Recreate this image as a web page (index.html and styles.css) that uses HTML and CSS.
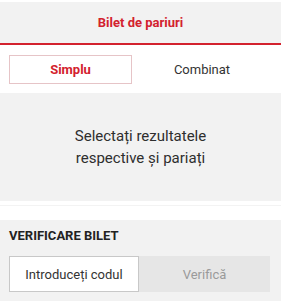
FILE: index.html
```html
<!DOCTYPE html>
<html>
<head>
<meta charset="utf-8">
<link rel="stylesheet" href="styles.css">
</head>
<body>
<div class="slip">
  <div class="header"><span class="title">Bilet de pariuri</span></div>
  <div class="tabs">
    <div class="tab active">Simplu</div>
    <div class="tab">Combinat</div>
  </div>
  <div class="empty">Selectați rezultatele<br>respective și pariați</div>
  <div class="spacer"></div>
  <div class="verify">
    <div class="verify-title">VERIFICARE BILET</div>
    <div class="verify-row">
      <div class="code-input">Introduceți codul</div>
      <div class="verify-btn">Verifică</div>
    </div>
  </div>
</div>
</body>
</html>
```
FILE: styles.css
```css
html, body {
  margin: 0;
  padding: 0;
  background: #fff;
}
body {
  font-family: Roboto, "Liberation Sans", sans-serif;
  color: #333;
}
.slip {
  width: 281px;
  padding-top: 2px;
}
.header {
  height: 41px;
  background: #f2f2f2;
  border-bottom: 2px solid #d3222e;
  display: flex;
  align-items: center;
  justify-content: center;
}
.title {
  color: #d3222e;
  font-weight: 700;
  font-size: 13px;
}
.tabs {
  height: 48px;
  display: flex;
  align-items: center;
  padding: 0 9px;
  box-sizing: border-box;
}
.tab {
  height: 29px;
  display: flex;
  align-items: center;
  justify-content: center;
  font-size: 13px;
  color: #333;
  box-sizing: border-box;
  flex: 1;
}
.tab.active {
  flex: 0 0 123px;
  border: 1px solid #e6c4c7;
  color: #d3222e;
  font-weight: 700;
}
.empty {
  height: 108px;
  background: #f2f2f2;
  display: flex;
  align-items: center;
  justify-content: center;
  text-align: center;
  font-size: 15px;
  line-height: 22px;
  color: #2e2e2e;
}
.spacer {
  height: 15px;
}
.spacer::after {
  content: "";
  display: block;
  height: 1px;
  margin-top: 4px;
  background: #f3f3f3;
}
.verify {
  background: #f2f2f2;
  padding: 8px 11px 9px 9px;
}
.verify-title {
  font-size: 13px;
  font-weight: 700;
  color: #222;
  line-height: 15px;
  margin-bottom: 13px;
}
.verify-row {
  display: flex;
  height: 36px;
}
.code-input {
  width: 130px;
  box-sizing: border-box;
  border: 1px solid #c8c8c8;
  background: #fff;
  display: flex;
  align-items: center;
  justify-content: center;
  font-size: 13px;
  color: #333;
}
.verify-btn {
  flex: 1;
  background: #e6e6e6;
  display: flex;
  align-items: center;
  justify-content: center;
  font-size: 13px;
  color: #9a9a9a;
}
```
